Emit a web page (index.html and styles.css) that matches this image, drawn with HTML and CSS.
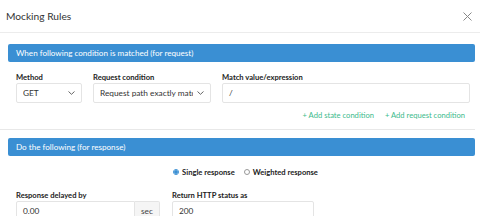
FILE: index.html
```html
<!DOCTYPE html>
<html>
<head>
<meta charset="utf-8">
<link rel="stylesheet" href="styles.css">
</head>
<body>
<div class="modal">
  <div class="header">
    <div class="title">Mocking Rules</div>
    <svg class="close" width="9" height="9" viewBox="0 0 9 9"><path d="M0.5 0.5L8.5 8.5M8.5 0.5L0.5 8.5" stroke="#888" stroke-width="1" fill="none"/></svg>
  </div>
  <div class="body">
    <div class="bar">When following condition is matched (for request)</div>
    <div class="row">
      <div class="field f-method">
        <div class="label">Method</div>
        <div class="select"><span class="val">GET</span><svg class="chev" width="7" height="4" viewBox="0 0 7 4"><path d="M0.5 0.5L3.5 3.3L6.5 0.5" stroke="#555" stroke-width="0.9" fill="none"/></svg></div>
      </div>
      <div class="field f-cond">
        <div class="label">Request condition</div>
        <div class="select"><span class="val">Request path exactly matches</span><svg class="chev" width="7" height="4" viewBox="0 0 7 4"><path d="M0.5 0.5L3.5 3.3L6.5 0.5" stroke="#555" stroke-width="0.9" fill="none"/></svg></div>
      </div>
      <div class="field f-match">
        <div class="label">Match value/expression</div>
        <div class="input"><span class="val">/</span></div>
      </div>
    </div>
    <div class="links">
      <span class="link">+ Add state condition</span>
      <span class="link">+ Add request condition</span>
    </div>
    <div class="sep"></div>
    <div class="bar">Do the following (for response)</div>
    <div class="radios">
      <label class="radio"><span class="dot on"></span>Single response</label>
      <label class="radio"><span class="dot"></span>Weighted response</label>
    </div>
    <div class="row row2">
      <div class="field f-delay">
        <div class="label">Response delayed by</div>
        <div class="group"><div class="input grow"><span class="val">0.00</span></div><div class="addon">sec</div></div>
      </div>
      <div class="field f-status">
        <div class="label">Return HTTP status as</div>
        <div class="input"><span class="val">200</span></div>
      </div>
    </div>
  </div>
</div>
</body>
</html>
```
FILE: styles.css
```css
html, body {
  margin: 0;
  padding: 0;
  background: #fff;
  font-family: Lato, "Noto Sans", sans-serif;
  color: #333;
}
.modal {
  width: 480px;
  height: 216px;
  overflow: hidden;
}
.header {
  height: 33px;
  border-bottom: 1px solid #ececec;
  display: flex;
  align-items: center;
  justify-content: space-between;
  padding: 0 8px 0 6px;
  box-sizing: border-box;
}
.title {
  font-size: 10.2px;
  color: #333;
}
.close {
  display: block;
}
.body {
  padding: 11px 5px 0 8px;
}
.bar {
  background: #3a8fd3;
  color: #fff;
  border-radius: 2px;
  height: 18px;
  line-height: 18px;
  font-size: 8.1px;
  padding-left: 8px;
}
.row {
  display: flex;
  padding: 10px 0 0 8px;
  gap: 11px;
}
.field {
  display: flex;
  flex-direction: column;
}
.label {
  font-size: 7.6px;
  font-weight: bold;
  color: #222;
  height: 10px;
  line-height: 10px;
  margin-bottom: 1px;
}
.select, .input {
  height: 20px;
  border: 1px solid #e4e4e4;
  border-radius: 2px;
  box-sizing: border-box;
  display: flex;
  align-items: center;
  font-size: 8.3px;
  color: #333;
  padding: 0 6px;
  overflow: hidden;
  white-space: nowrap;
}
.select {
  justify-content: space-between;
}
.select .val {
  overflow: hidden;
  flex: 1;
}
.chev {
  flex: none;
  margin-left: 4px;
}
.f-method { width: 66px; }
.f-cond { width: 118px; }
.f-match { width: 248px; }
.links {
  display: flex;
  justify-content: flex-end;
  gap: 11px;
  padding-right: 10px;
  margin-top: 7px;
  height: 10px;
  line-height: 10px;
}
.link {
  font-size: 7.6px;
  color: #3cba8c;
}
.sep {
  border-top: 1px solid #e8e8e8;
  margin: 9px 0 8px -8px;
}
.radios {
  display: flex;
  justify-content: center;
  gap: 9px;
  margin-top: 10px;
  height: 12px;
  align-items: center;
  padding-left: 8px;
}
.radio {
  display: flex;
  align-items: center;
  font-size: 7.6px;
  font-weight: bold;
  color: #222;
}
.dot {
  width: 6px;
  height: 6px;
  border-radius: 50%;
  border: 1px solid #999;
  margin-right: 3px;
  box-sizing: border-box;
}
.dot.on {
  border: 1px solid #3a8fd3;
  background: radial-gradient(circle, #3a8fd3 0 55%, #fff 60%);
}
.row2 {
  padding-top: 12px;
  gap: 12px;
}
.f-delay { width: 144px; }
.f-status { width: 142px; }
.group {
  display: flex;
}
.grow {
  flex: 1;
  border-radius: 2px 0 0 2px;
}
.addon {
  width: 25px;
  height: 20px;
  box-sizing: border-box;
  background: #f5f5f5;
  border: 1px solid #e4e4e4;
  border-left: none;
  border-radius: 0 2px 2px 0;
  font-size: 8.3px;
  color: #444;
  display: flex;
  align-items: center;
  justify-content: center;
}
```
